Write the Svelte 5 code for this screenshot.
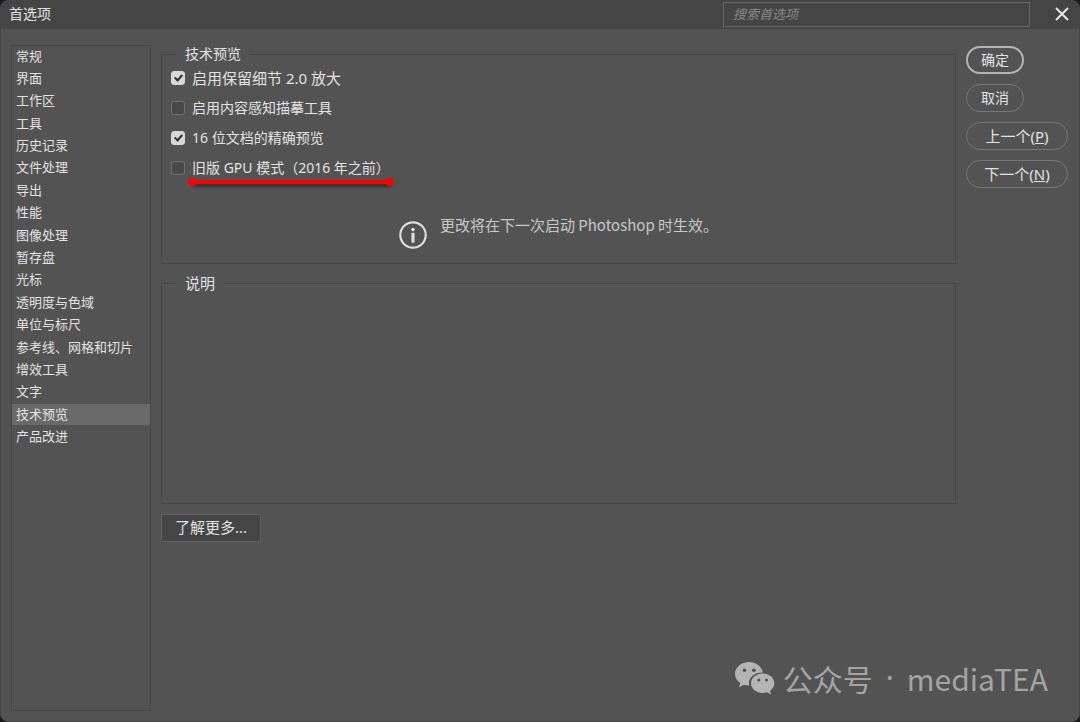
<script lang="ts">
    const sections: string[] = [
        '常规', '界面', '工作区', '工具', '历史记录', '文件处理', '导出', '性能', '图像处理',
        '暂存盘', '光标', '透明度与色域', '单位与标尺', '参考线、网格和切片', '增效工具',
        '文字', '技术预览', '产品改进'
    ];
    let current = $state('技术预览');
    let options = $state([
        { id: 'details', label: '启用保留细节 2.0 放大', checked: true, wide: true },
        { id: 'tracing', label: '启用内容感知描摹工具', checked: false },
        { id: 'preview16', label: '16 位文档的精确预览', checked: true },
        { id: 'legacy-gpu', label: '旧版 GPU 模式（2016 年之前）', checked: false, marked: true }
    ]);
</script>

<svelte:head>
    <title>首选项</title>
</svelte:head>

<div class="window">
    <header>
        <h1>首选项</h1>
        <input class="search" type="text" placeholder="搜索首选项" aria-label="搜索首选项">
        <button class="close" aria-label="关闭">
            <svg width="14" height="14" viewBox="0 0 14 14"><path d="M1 1L13 13M13 1L1 13" /></svg>
        </button>
    </header>

    <div class="body">
        <nav>
            <ul>
                {#each sections as name}
                    <li><button class:active={current === name} onclick={() => current = name}>{name}</button></li>
                {/each}
            </ul>
        </nav>

        <main>
            <fieldset class="preview">
                <legend>技术预览</legend>
                {#each options as option}
                    <div class="option">
                        <input type="checkbox" id={option.id} bind:checked={option.checked}>
                        <label for={option.id} class:wide={option.wide}>
                            {option.label}
                            {#if option.marked}
                                <span class="marker"></span>
                            {/if}
                        </label>
                    </div>
                {/each}
                <div class="note">
                    <svg width="28" height="28" viewBox="0 0 28 28">
                        <circle cx="14" cy="14" r="12.7" fill="none" stroke="#dcdcdc" stroke-width="2.2" />
                        <circle cx="14" cy="8.6" r="1.8" fill="#dcdcdc" />
                        <rect x="12.4" y="11.8" width="3.2" height="10" rx="0.8" fill="#dcdcdc" />
                    </svg>
                    <p>更改将在下一次启动 Photoshop 时生效。</p>
                </div>
            </fieldset>

            <fieldset class="description">
                <legend class="wide">说明</legend>
            </fieldset>

            <button class="more">了解更多...</button>
        </main>

        <aside>
            <button class="pill primary">确定</button>
            <button class="pill">取消</button>
            <button class="pill long">上一个(<u>P</u>)</button>
            <button class="pill long">下一个(<u>N</u>)</button>
        </aside>
    </div>

    <div class="watermark">
        <svg width="40" height="33" viewBox="0 0 40 33">
            <path fill="#b4b4b4" d="M14 0C6.200 0 0 5.200 0 11.900C0 15.700 2 18.900 5.300 21.100L3.900 25.300L9 22.700C10.700 23.200 12.300 23.600 14.300 23.500C12.500 16.500 18.300 10.300 27.800 10.400C26.600 4.300 20.900 0 14 0Z" />
            <path fill="#b4b4b4" d="M27.700 11.500C21.200 11.500 16 15.800 16 21.300C16 26.800 21.200 31 27.700 31C29.100 31 30.500 30.700 31.800 30.300L36.100 32.600L35 28.900C37.600 27 39.300 24.400 39.300 21.300C39.300 15.800 34.100 11.500 27.700 11.500Z" />
            <g fill="#505050">
                <circle cx="9.500" cy="8.300" r="1.800" />
                <circle cx="18.900" cy="8.300" r="1.800" />
                <circle cx="23.800" cy="18" r="1.500" />
                <circle cx="31.500" cy="18" r="1.500" />
            </g>
        </svg>
        <div class="account">
            <span>公众号</span>
            <span class="dot">·</span>
            <span>mediaTEA</span>
        </div>
    </div>
</div>

<style>
    :global(body) {
        margin: 0;
        background: #1c1a1c;
    }

    .window {
        position: relative;
        display: flex;
        flex-direction: column;
        box-sizing: border-box;
        min-height: 100vh;
        background: #535353;
        border: 1px solid #454545;
        border-radius: 8px;
        overflow: hidden;
        color: #e2e2e2;
        font-family: "Noto Sans", "Noto Sans CJK SC", sans-serif;
        font-size: 14px;
        font-weight: 400;
        line-height: 18px;
    }

    button, input {
        box-sizing: border-box;
        margin: 0;
        padding: 0;
        border: 0;
        background: none;
        color: inherit;
        font: inherit;
    }

    header {
        display: flex;
        align-items: center;
        height: 28px;
        padding: 0 10px 0 8px;
        background: #454545;
    }

    h1 {
        flex: 1;
        margin: 0;
        padding-bottom: 2px;
        font-size: 14px;
        font-weight: 400;
    }

    .search {
        width: 307px;
        height: 25px;
        margin-bottom: 2px;
        padding: 0 9px;
        border: 1px solid #666;
        font-size: 13px;
        font-style: italic;
    }

    .search::placeholder {
        color: #888;
        opacity: 1;
    }

    .close {
        display: flex;
        margin: 0 0 2px 25px;
    }

    .close path {
        stroke: #e6e6e6;
        stroke-width: 2;
    }

    .body {
        flex: 1;
        display: flex;
        gap: 10px;
        padding: 16px 11px 10px 10px;
    }

    nav {
        box-sizing: border-box;
        width: 140px;
        border: 1px solid #474747;
    }

    ul {
        display: grid;
        grid-auto-rows: 1fr;
        height: 403px;
        margin: 0;
        padding: 0;
        list-style: none;
    }

    nav button {
        display: block;
        width: 100%;
        height: 21px;
        padding: 0 4px 2px;
        font-size: 13px;
        text-align: left;
        white-space: nowrap;
    }

    nav button.active {
        background: #696969;
    }

    main {
        flex: 1;
        display: flex;
        flex-direction: column;
        align-items: stretch;
        gap: 10px;
    }

    fieldset {
        box-sizing: border-box;
        margin: 0;
        padding: 0 9px;
        border: 1px solid #474747;
    }

    legend {
        margin-left: 6px;
        padding: 0 8px;
    }

    .wide {
        font-size: 15px;
    }

    .preview {
        padding-bottom: 14px;
    }

    .description {
        height: 230px;
    }

    .option {
        display: flex;
        align-items: center;
        gap: 7px;
        height: 30px;
    }

    .option label {
        position: relative;
    }

    .option input {
        appearance: none;
        display: grid;
        place-items: center;
        width: 14px;
        height: 14px;
        border: 1px solid #707070;
        border-radius: 3px;
        background: #484848;
    }

    .option input:checked {
        border-color: #d8d8d8;
        background: #d8d8d8;
    }

    .option input:checked::after {
        content: "";
        width: 3px;
        height: 6px;
        margin-bottom: 2px;
        border: solid #333;
        border-width: 0 2px 2px 0;
        transform: rotate(42deg);
    }

    .marker {
        position: absolute;
        left: 0;
        right: 0;
        top: 21px;
        height: 4px;
        background: #f00;
        border-radius: 2px;
        box-shadow: 1px 3px 3px rgba(0, 0, 0, 0.4);
    }

    .marker::before, .marker::after {
        content: "";
        position: absolute;
        top: -2px;
        width: 8px;
        height: 8px;
        border-radius: 50%;
        background: #f00;
    }

    .marker::before {
        left: -4px;
    }

    .marker::after {
        right: -4px;
    }

    .note {
        display: flex;
        justify-content: center;
        gap: 13px;
        margin-top: 33px;
        color: #c8c8c8;
    }

    .note svg {
        margin-top: 5px;
    }

    .note p {
        margin: 0;
        font-family: "Noto Sans CJK SC", sans-serif;
        font-size: 15px;
    }

    .more {
        align-self: flex-start;
        height: 28px;
        padding: 0 13px 2px;
        border: 1px solid #606060;
        border-radius: 2px;
        background: #454545;
        font-size: 15px;
    }

    aside {
        display: flex;
        flex-direction: column;
        align-items: flex-start;
        gap: 10px;
        width: 102px;
        padding-top: 1px;
    }

    .pill {
        width: 58px;
        height: 28px;
        border: 1px solid #777;
        border-radius: 14px;
    }

    .pill.primary {
        border: 2px solid #b4b4b4;
    }

    .pill.long {
        width: 102px;
        font-size: 15px;
    }

    .watermark {
        position: absolute;
        right: 31px;
        bottom: 23px;
        display: flex;
        align-items: center;
        gap: 8px;
        color: #a4a4a4;
        font-family: "Noto Sans CJK SC", sans-serif;
        font-size: 30px;
        line-height: 40px;
    }

    .account {
        display: flex;
        gap: 13px;
    }

    .account .dot {
        font-family: "Noto Sans", sans-serif;
    }
</style>
